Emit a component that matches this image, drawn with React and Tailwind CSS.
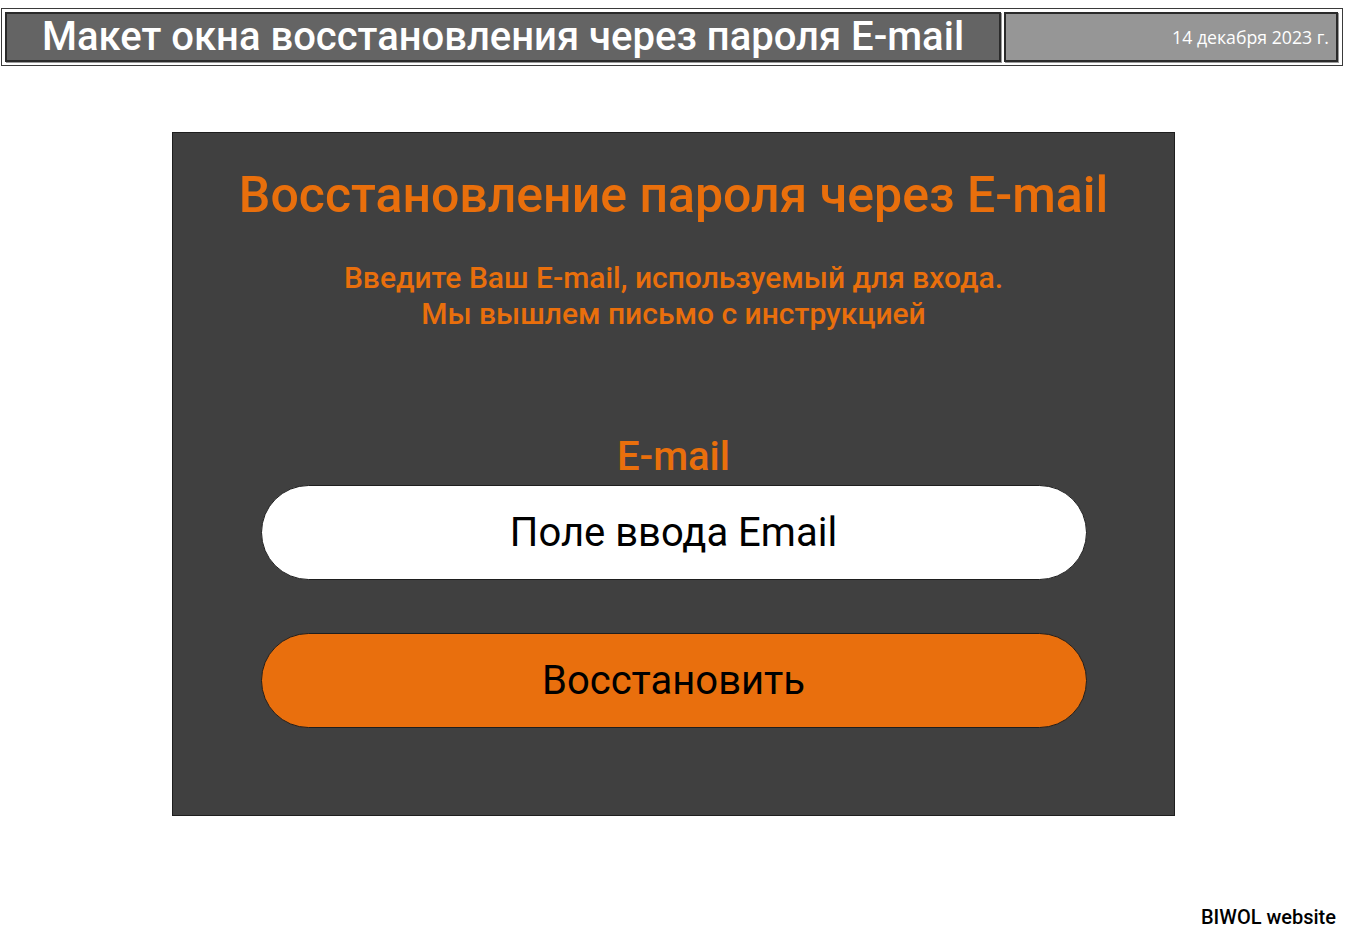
import React from 'react';

const roboto = { fontFamily: 'Roboto, "Noto Sans", sans-serif' };

const Header = () => (
  <div className="ml-[1px] mt-[8px] flex h-[58px] w-[1342px] gap-[3px] border border-[#3a3a3a] py-[3px] pl-[3px] pr-[4px]">
    <div className="flex w-[996px] items-center justify-center border-2 border-[#2a2a2a] bg-[#646464] shadow-[1px_1px_0_#9a9a9a]">
      <span className="text-[40px] font-medium leading-none text-white" style={roboto}>
        Макет окна восстановления через пароля E-mail
      </span>
    </div>
    <div className="flex flex-1 items-center justify-end border-2 border-[#2a2a2a] bg-[#969696] pr-[7px] shadow-[1px_1px_0_#9a9a9a]">
      <span className="text-[17.7px] text-white" style={{ fontFamily: '"Open Sans", "Noto Sans", sans-serif' }}>
        14 декабря 2023 г.
      </span>
    </div>
  </div>
);

const RecoverCard = () => (
  <div className="ml-[172px] mt-[66px] flex h-[684px] w-[1003px] flex-col items-center border border-[#1e1e1e] bg-[#404040]" style={roboto}>
    <h1 className="mt-[30px] text-[50px] font-medium leading-[64px] text-[#e96f0c]">
      Восстановление пароля через E-mail
    </h1>
    <p className="mt-[33px] text-center text-[30px] font-medium leading-[36px] text-[#e96f0c]">
      Введите Ваш E-mail, используемый для входа.
      <br />
      Мы вышлем письмо с инструкцией
    </p>
    <div className="mt-[101px] text-[40px] font-medium leading-[48px] text-[#e96f0c]">E-mail</div>
    <div className="mt-[4px] flex h-[95px] w-[826px] items-center justify-center rounded-full border border-[#1e1e1e] bg-white">
      <span className="text-[40px] text-black">Поле ввода Email</span>
    </div>
    <button className="mt-[53px] flex h-[95px] w-[826px] items-center justify-center rounded-full border border-[#1e1e1e] bg-[#e96f0d]">
      <span className="text-[40px] text-black">Восстановить</span>
    </button>
  </div>
);

export default function App() {
  return (
    <div className="relative h-[941px] w-full overflow-hidden bg-white">
      <Header />
      <RecoverCard />
      <div className="absolute bottom-[9px] right-[11px] text-[20px] font-medium text-black" style={roboto}>
        BIWOL website
      </div>
    </div>
  );
}
